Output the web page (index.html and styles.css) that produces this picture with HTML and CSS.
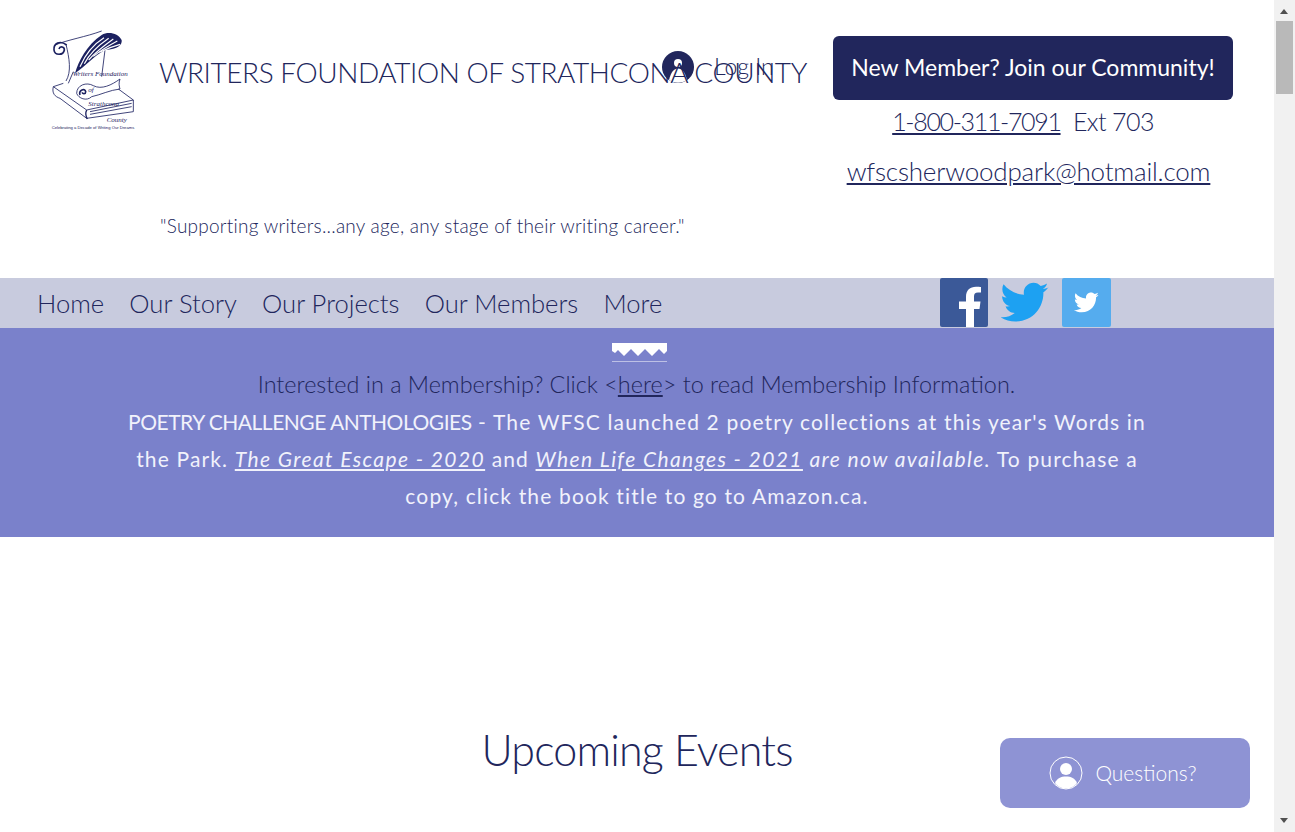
FILE: index.html
```html
<!DOCTYPE html>
<html lang="en">
<head>
  <meta charset="UTF-8" />
  <title>Writers Foundation of Strathcona County</title>
  <link rel="stylesheet" href="styles.css">
</head>
<body>
  <div class="window">
    <div class="page">
      <header class="header">
        <svg class="logo" viewBox="60 30 270 321" width="90" height="107">
          <g fill="none" stroke="#1c2160" stroke-width="2.500">
            <path d="M110 90 C90 75 70 85 72 105 C74 122 100 122 103 105 C104 95 90 92 87 102" stroke-width="5"/>
            <path d="M75 90 C110 75 170 65 215 48"/>
            <path d="M108 88 C118 130 125 170 108 198"/>
            <path d="M130 170 L115 205"/>
            <path d="M140 235 C140 210 170 200 190 212 C215 225 245 210 270 192 C265 205 268 215 270 222 C240 225 210 240 185 245 C170 260 145 250 140 235"/>
            <path d="M150 240 C145 225 165 218 167 230 C167 238 157 238 157 232" stroke-width="5"/>
            <path d="M100 205 L70 215 C65 235 75 245 90 250 L170 310 L310 290 L310 255 L265 222"/>
            <path d="M70 215 L170 285 L310 255"/>
            <path d="M170 285 C165 295 168 305 172 312" stroke-width="4"/>
            <path d="M180 290 L305 265 M180 298 L305 275"/>
            <path d="M225 105 L215 185"/>
          </g>
          <path d="M135 175 C145 140 170 90 215 60 C235 48 265 55 275 75 C277 90 265 102 225 105 C195 120 165 155 135 175Z" fill="#1c2160"/>
          <g fill="none" stroke="#fff" stroke-width="3.500">
            <path d="M150 155 C165 120 190 88 222 68"/>
            <path d="M163 146 C178 118 204 92 236 70"/>
            <path d="M176 135 C194 114 218 95 250 72"/>
            <path d="M190 124 C210 108 232 94 262 78"/>
            <path d="M208 112 C228 102 248 94 270 88"/>
          </g>
          <text class="logo-script" x="128" y="182">Writers Foundation</text>
          <text class="logo-script" x="175" y="232">of</text>
          <text class="logo-script" x="175" y="274">Strathcona</text>
          <text class="logo-script" x="230" y="320">County</text>
          <text class="logo-tag" x="65" y="342">Celebrating a Decade of Writing Our Dreams</text>
        </svg>

        <div class="brand">
          <h1 class="site-title">WRITERS FOUNDATION OF STRATHCONA COUNTY</h1>
          <p class="tagline">"Supporting writers...any age, any stage of their writing career."</p>
        </div>

        <div class="login">
          <svg class="login-icon" viewBox="0 0 32 32" width="32" height="32">
            <circle cx="16" cy="16" r="16" fill="#21265c"/>
            <circle cx="16" cy="12" r="4" fill="#fff"/>
            <path d="M7 29 C9 21 12 17.500 16 17.500 C20 17.500 23 21 25 29 C20 32.500 12 32.500 7 29Z" fill="#fff"/>
          </svg>
          <span class="login-text">Log In</span>
        </div>

        <div class="contact">
          <a class="join-btn" href="#">New Member? Join our Community!</a>
          <p class="phone"><a href="#">1-800-311-7091</a>&nbsp; Ext 703</p>
          <p class="email"><a href="#">wfscsherwoodpark@hotmail.com</a></p>
        </div>
      </header>

      <nav class="nav">
        <ul class="nav-links">
          <li>Home</li>
          <li>Our Story</li>
          <li>Our Projects</li>
          <li>Our Members</li>
          <li>More</li>
        </ul>
        <div class="socials">
          <svg class="social" viewBox="0 0 48 49" width="48" height="49">
            <rect width="48" height="49" rx="2" fill="#3b5998"/>
            <path d="M34 49V31h5.500l1-7.500H34v-5c0-2.500 1-4 4-4h3V9c-1-.2-3-.3-5-.3-6 0-10 3.500-10 10v4.800h-7V31h7V49Z" fill="#fff"/>
          </svg>
          <svg class="social" viewBox="0.5 0 23 24" width="48" height="49">
            <path fill="#1da1f2" d="M23.500 4.600c-.9.400-1.800.6-2.800.8 1-.6 1.800-1.500 2.100-2.700-.9.600-2 1-3.100 1.200C18.800 2.900 17.500 2.300 16.200 2.300c-2.700 0-4.800 2.200-4.800 4.800 0 .4 0 .8.100 1.100C7.500 8 3.900 6.100 1.500 3.100 1.100 3.800.9 4.600.9 5.500c0 1.700.9 3.200 2.100 4-.8 0-1.500-.2-2.200-.6v.1c0 2.300 1.700 4.300 3.900 4.700-.4.100-.8.200-1.300.2-.3 0-.6 0-.9-.1.600 1.900 2.400 3.300 4.500 3.300-1.700 1.300-3.700 2.100-6 2.100-.4 0-.8 0-1.100-.1 2.100 1.400 4.700 2.200 7.400 2.200 8.900 0 13.700-7.300 13.700-13.700v-.6c1-.7 1.800-1.500 2.400-2.500z"/>
          </svg>
          <svg class="social" viewBox="0 0 49 49" width="49" height="49">
            <rect width="49" height="49" rx="2" fill="#55acee"/>
            <g transform="translate(12 12) scale(1.050)">
              <path fill="#fff" d="M23.500 4.600c-.9.400-1.800.6-2.800.8 1-.6 1.800-1.500 2.100-2.700-.9.600-2 1-3.100 1.200C18.800 2.900 17.500 2.300 16.200 2.300c-2.700 0-4.800 2.200-4.800 4.800 0 .4 0 .8.100 1.100C7.500 8 3.900 6.100 1.500 3.100 1.100 3.800.9 4.600.9 5.500c0 1.700.9 3.200 2.100 4-.8 0-1.500-.2-2.200-.6v.1c0 2.300 1.700 4.300 3.900 4.700-.4.100-.8.200-1.300.2-.3 0-.6 0-.9-.1.600 1.900 2.400 3.300 4.500 3.300-1.700 1.300-3.700 2.100-6 2.100-.4 0-.8 0-1.100-.1 2.100 1.400 4.700 2.200 7.400 2.200 8.900 0 13.700-7.300 13.700-13.700v-.6c1-.7 1.800-1.500 2.400-2.500z"/>
            </g>
          </svg>
        </div>
      </nav>

      <section class="banner">
        <svg class="banner-mark" viewBox="0 0 55 19" width="55" height="19">
          <path fill="#fff" d="M0 0H55V8L52 11 47 6 40 13 33 6 26 13 19 6 12 13 6 7 3 10 0 8Z"/>
          <rect y="18" width="55" height="1" fill="#fff" opacity=".5"/>
        </svg>
        <p class="banner-info">Interested in a Membership? Click &lt;<a href="#">here</a>&gt; to read Membership Information.</p>
        <p class="banner-news"><span class="news-caps">POETRY CHALLENGE ANTHOLOGIES</span> - The WFSC launched 2 poetry collections at this year's Words in the Park. <a href="#"><em>The Great Escape - 2020</em></a> and <a href="#"><em>When Life Changes - 2021</em></a> <em>are now available.</em> To purchase a copy, click the book title to go to Amazon.ca.</p>
      </section>

      <section class="events">
        <h2 class="events-title">Upcoming Events</h2>
      </section>

      <div class="chat-btn">
        <svg viewBox="0 0 34 34" width="34" height="34">
          <circle cx="17" cy="17" r="16" fill="none" stroke="#fff" stroke-width="1"/>
          <circle cx="17" cy="13" r="6" fill="#fff"/>
          <path d="M6 27 C8 22 12 20.500 17 20.500 C22 20.500 26 22 28 27 C25 31 21 32.500 17 32.500 C13 32.500 9 31 6 27Z" fill="#fff"/>
        </svg>
        <span class="chat-text">Questions?</span>
      </div>
    </div>

    <div class="scrollbar">
      <span class="arrow-up"></span>
      <span class="thumb"></span>
      <span class="arrow-down"></span>
    </div>
  </div>
</body>
</html>
```

FILE: styles.css
```css
html, body {
  margin: 0;
  height: 100%;
  overflow: hidden;
}
body {
  font-family: "Lato", "Liberation Sans", sans-serif;
  font-weight: 300;
  color: #21265c;
  background: #fff;
}
p, h1, h2, ul {
  margin: 0;
  padding: 0;
}
a {
  color: inherit;
}
.window {
  display: flex;
  height: 832px;
}
.page {
  position: relative;
  width: 1274px;
  height: 832px;
  overflow: hidden;
}

/* header */
.header {
  position: relative;
  display: flex;
  height: 278px;
}
.logo {
  flex: none;
  margin: 25px 0 0 50px;
}
.logo-script {
  font-family: "Liberation Serif", serif;
  font-style: italic;
  font-size: 21px;
  fill: #1c2160;
}
.logo-tag {
  font-family: "Liberation Sans", sans-serif;
  font-size: 12.500px;
  fill: #1c2160;
}
.brand {
  position: relative;
  z-index: 1;
  flex: none;
  width: 660px;
  margin: 55px 0 0 19px;
}
.site-title {
  font-size: 28px;
  line-height: 34px;
  font-weight: 300;
  letter-spacing: -0.430px;
  white-space: nowrap;
}
.tagline {
  margin-top: 125px;
  margin-left: 1px;
  font-size: 19px;
  line-height: 24px;
  font-weight: 300;
  letter-spacing: 0.240px;
  white-space: nowrap;
}
.login {
  position: absolute;
  left: 662px;
  top: 51px;
  display: flex;
  align-items: center;
  gap: 20px;
}
.login-text {
  font-size: 23px;
  margin-top: -2px;
}
.contact {
  flex: none;
  width: 400px;
  margin: 36px 0 0 14px;
  text-align: center;
  font-size: 25px;
}
.join-btn {
  display: block;
  height: 64px;
  line-height: 62px;
  border-radius: 6px;
  background: #21265c;
  color: #fff;
  font-size: 23px;
  font-weight: 400;
  text-decoration: none;
  white-space: nowrap;
}
.phone {
  margin-top: 3px;
  padding-right: 20px;
  line-height: 36px;
  letter-spacing: -0.600px;
}
.phone a {
  letter-spacing: -1.350px;
}
.email {
  margin-top: 14px;
  padding-right: 9px;
  font-size: 26px;
  line-height: 36px;
  letter-spacing: -0.200px;
  white-space: nowrap;
}

/* nav */
.nav {
  display: flex;
  align-items: flex-start;
  height: 50px;
  background: #c8cbde;
}
.nav-links {
  display: flex;
  gap: 25.200px;
  list-style: none;
  width: 940px;
  padding-left: 37px;
  box-sizing: border-box;
  font-size: 25.600px;
  line-height: 51px;
  font-weight: 300;
}
.socials {
  display: flex;
  gap: 13px;
}
.social {
  display: block;
}

/* banner */
.banner {
  height: 209px;
  box-sizing: border-box;
  padding-top: 15px;
  background: #7a81cb;
  text-align: center;
}
.banner-mark {
  display: block;
  margin: 0 auto 0 612px;
}
.banner-info {
  font-size: 23.400px;
  line-height: 37px;
  margin-top: 4px;
  margin-right: 1px;
}
.banner-news {
  width: 1040px;
  margin: 0 auto;
  font-weight: 400;
  font-size: 21px;
  line-height: 37px;
  letter-spacing: 1.150px;
  color: #f1f2fb;
}
.banner-news em {
  letter-spacing: 1.400px;
}
.news-caps {
  letter-spacing: -0.500px;
}

/* events */
.events {
  padding-top: 182px;
  text-align: center;
}
.events-title {
  font-size: 43px;
  line-height: 62px;
  font-weight: 300;
  letter-spacing: -0.800px;
}

/* floating chat button */
.chat-btn {
  position: absolute;
  left: 1000px;
  top: 738px;
  width: 250px;
  height: 70px;
  box-sizing: border-box;
  padding-right: 4px;
  display: flex;
  align-items: center;
  justify-content: center;
  gap: 12px;
  border-radius: 10px;
  background: #8e93d4;
  color: #fff;
  font-size: 21px;
}
.chat-text {
  margin-top: -2px;
}

/* fake browser scrollbar */
.scrollbar {
  position: relative;
  width: 21px;
  background: #f1f1f1;
}
.thumb {
  position: absolute;
  left: 2px;
  top: 21px;
  width: 17px;
  height: 73px;
  background: #b9b9b9;
}
.arrow-up, .arrow-down {
  position: absolute;
  left: 6px;
  width: 0;
  height: 0;
  border-left: 4.500px solid transparent;
  border-right: 4.500px solid transparent;
}
.arrow-up {
  top: 9px;
  border-bottom: 5px solid #505050;
}
.arrow-down {
  top: 818px;
  border-top: 5px solid #505050;
}
```
